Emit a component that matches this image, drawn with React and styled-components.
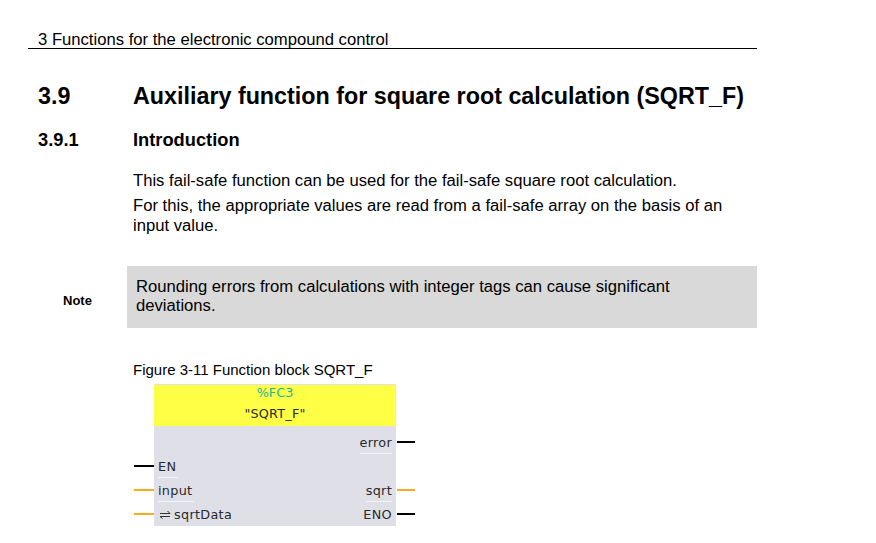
import React from "react";
import styled, { createGlobalStyle } from "styled-components";

const GlobalStyle = createGlobalStyle`
  html, body { margin: 0; padding: 0; background: #fff; }
  body { font-family: "Liberation Sans", Arial, sans-serif; color: #000; }
`;

const Page = styled.div`
  width: 876px;
  height: 543px;
  box-sizing: border-box;
  padding: 30px 0 0 28px;
  overflow: hidden;
`;
const RunningHead = styled.div`
  width: 729px;
  box-sizing: border-box;
  padding-left: 10px;
  height: 19px;
  border-bottom: 1px solid #000;
  font-size: 16.65px;
  line-height: 19px;
`;
const Heading = styled.div`
  display: flex;
  margin-left: 10px;
  margin-top: ${(p) => p.$top}px;
  font-weight: bold;
  font-size: ${(p) => p.$size}px;
  line-height: ${(p) => p.$line}px;
`;
const HeadingNo = styled.div`
  width: 95px;
`;
const Para = styled.p`
  margin: ${(p) => p.$top || 0}px 0 0 105px;
  width: 610px;
  font-size: 16.65px;
  line-height: 20px;
`;
const NoteRow = styled.div`
  display: flex;
  align-items: center;
  margin-top: 30px;
`;
const NoteLabel = styled.div`
  width: 99px;
  box-sizing: border-box;
  padding: 6px 0 0 35px;
  font-size: 13px;
  font-weight: bold;
`;
const NoteBox = styled.div`
  width: 630px;
  height: 62px;
  box-sizing: border-box;
  padding: 11px 9px;
  background: #d9d9d9;
  font-size: 16.65px;
  line-height: 19px;
`;
const Figure = styled.div`
  margin: 33px 0 0 105px;
  width: 290px;
`;
const Caption = styled.div`
  font-size: 15px;
  line-height: 17px;
`;
const Block = styled.div`
  margin-top: 6px;
  font-family: "DejaVu Sans", Verdana, sans-serif;
  font-size: 12.8px;
  color: #2a2a2a;
`;
const BlockHead = styled.div`
  margin-left: 21px;
  width: 242px;
  height: 42px;
  box-sizing: border-box;
  background: #ffff45;
  border-top: 1px solid #e2e2e2;
  padding-top: 1px;
  text-align: center;
`;
const BlockNumber = styled.div`
  color: #1bb5a0;
  height: 21px;
  line-height: 14px;
`;
const BlockName = styled.div`
  line-height: 14px;
  letter-spacing: 0.2px;
`;
const Body = styled.div`
  padding: 4px 0 0;
  width: 284px;
  background: linear-gradient(#dfe0e7, #dfe0e7) 21px 0 / 242px 100% no-repeat;
`;
const PinRow = styled.div`
  display: grid;
  grid-template-columns: 21px 1fr 1fr 21px;
  align-items: stretch;
  height: 24px;
  &:last-child { margin-bottom: -2px; }
`;
const Stub = styled.div`
  align-self: center;
  justify-self: ${(p) => (p.$right ? "start" : "end")};
  margin-left: ${(p) => (p.$right ? 1 : 0)}px;
  width: ${(p) => (p.$right ? 18 : 20)}px;
  height: 2px;
  background: ${(p) => p.$color || "transparent"};
`;
const PinCell = styled.div`
  display: flex;
  justify-content: ${(p) => (p.$right ? "flex-end" : "flex-start")};
  padding: ${(p) => (p.$right ? "0 4px 0 0" : "0 0 0 4px")};
`;
const PinName = styled.div`
  display: flex;
  align-items: center;
  gap: 2px;
  height: 24px;
  box-sizing: border-box;
  padding: 2px ${(p) => (p.$right ? 0 : 2)}px 0 0;
  letter-spacing: 0.3px;
  border-bottom: 1px solid ${(p) => (p.$mark ? "#f5f5f7" : "transparent")};
`;

const BLACK = "#000";
const ORANGE = "#fca91e";

const Pin = ({ left, right, leftColor, rightColor, leftMark, rightMark, children }) => (
  <PinRow>
    <Stub $color={leftColor} />
    <PinCell>
      {left && <PinName $mark={leftMark}>{children}{left}</PinName>}
    </PinCell>
    <PinCell $right>
      {right && <PinName $right $mark={rightMark}>{right}</PinName>}
    </PinCell>
    <Stub $right $color={rightColor} />
  </PinRow>
);

const InOutIcon = () => (
  <svg width="14" height="9" viewBox="0 0 14 9" fill="none" stroke="#333" strokeWidth="1">
    <path d="M2 3.5h10L9.5 1" />
    <path d="M12 6.5H2L4.5 8.5" />
  </svg>
);

export default function App() {
  return (
    <Page>
      <GlobalStyle />
      <RunningHead>3 Functions for the electronic compound control</RunningHead>
      <Heading $top={33} $size={23.3} $line={28}>
        <HeadingNo>3.9</HeadingNo>
        Auxiliary function for square root calculation (SQRT_F)
      </Heading>
      <Heading $top={20} $size={18.3} $line={20}>
        <HeadingNo>3.9.1</HeadingNo>
        Introduction
      </Heading>
      <Para $top={21}>This fail-safe function can be used for the fail-safe square root calculation.</Para>
      <Para $top={5}>
        For this, the appropriate values are read from a fail-safe array on the basis of an input value.
      </Para>
      <NoteRow>
        <NoteLabel>Note</NoteLabel>
        <NoteBox>
          Rounding errors from calculations with integer tags can cause significant deviations.
        </NoteBox>
      </NoteRow>
      <Figure>
        <Caption>Figure 3-11 Function block SQRT_F</Caption>
        <Block>
          <BlockHead>
            <BlockNumber>%FC3</BlockNumber>
            <BlockName>"SQRT_F"</BlockName>
          </BlockHead>
          <Body>
            <Pin right="error" rightColor={BLACK} rightMark />
            <Pin left="EN" leftColor={BLACK} leftMark />
            <Pin left="input" right="sqrt" leftColor={ORANGE} rightColor={ORANGE} leftMark rightMark />
            <Pin left="sqrtData" right="ENO" leftColor={ORANGE} rightColor={BLACK}>
              <InOutIcon />
            </Pin>
          </Body>
        </Block>
      </Figure>
    </Page>
  );
}
